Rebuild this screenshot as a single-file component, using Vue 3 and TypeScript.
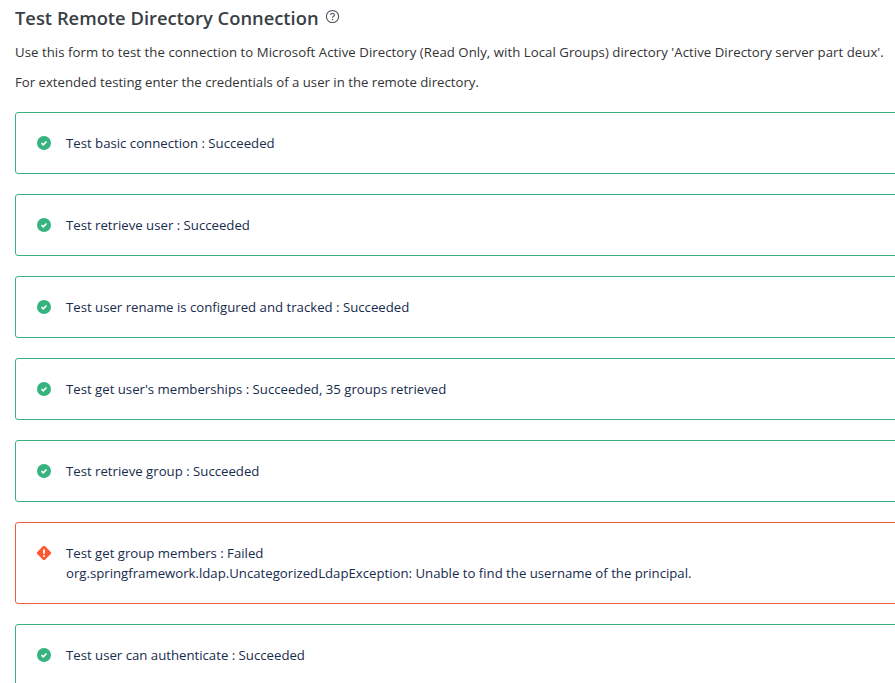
<template>
  <div class="page">
    <div class="title-row">
      <h1 class="title">Test Remote Directory Connection</h1>
      <svg class="help" viewBox="0 0 16 16" fill="none" stroke="#4a5158" aria-hidden="true">
        <circle cx="8" cy="8" r="6.5" stroke-width="1.1" />
        <path d="M6 6.4c0-1.2.9-1.9 2-1.9s2 .7 2 1.8c0 1.6-2 1.5-2 3" stroke-width="1.2" />
        <circle cx="8" cy="11.3" r=".8" fill="#4a5158" stroke="none" />
      </svg>
    </div>
    <p class="intro first">Use this form to test the connection to Microsoft Active Directory (Read Only, with Local Groups) directory 'Active Directory server part deux'.</p>
    <p class="intro second">For extended testing enter the credentials of a user in the remote directory.</p>

    <div class="results">
      <div v-for="result in results" :key="result.label" class="result" :class="result.error ? 'failed' : 'passed'">
        <svg v-if="!result.error" class="status" viewBox="0 0 14 14" aria-hidden="true">
          <circle cx="7" cy="7" r="7" fill="#36b37e" />
          <path d="M4.5 7.2l1.8 1.7 3.2-3.4" fill="none" stroke="#fff" stroke-width="1.6" />
        </svg>
        <svg v-else class="status" viewBox="0 0 14 14" aria-hidden="true">
          <path d="M5.7.5a1.9 1.9 0 0 1 2.6 0l5.2 5.2a1.9 1.9 0 0 1 0 2.6l-5.2 5.2a1.9 1.9 0 0 1-2.6 0L.5 8.3a1.9 1.9 0 0 1 0-2.6z" fill="#ff5630" />
          <path d="M7 3.2v4.6" stroke="#fff" stroke-width="1.9" />
          <circle cx="7" cy="10.1" r="1.05" fill="#fff" />
        </svg>
        <div class="message">
          <div>{{ result.label }}</div>
          <div v-if="result.error">{{ result.error }}</div>
        </div>
      </div>
    </div>
  </div>
</template>

<script setup lang="ts">
interface TestResult {
  label: string
  error?: string
}

const results: TestResult[] = [
  { label: 'Test basic connection : Succeeded' },
  { label: 'Test retrieve user : Succeeded' },
  { label: 'Test user rename is configured and tracked : Succeeded' },
  { label: "Test get user's memberships : Succeeded, 35 groups retrieved" },
  { label: 'Test retrieve group : Succeeded' },
  {
    label: 'Test get group members : Failed',
    error: 'org.springframework.ldap.UncategorizedLdapException: Unable to find the username of the principal.'
  },
  { label: 'Test user can authenticate : Succeeded' }
]
</script>

<style scoped>
.page {
  width: 895px;
  height: 683px;
  overflow: hidden;
  padding: 6px 0 0 15px;
  box-sizing: border-box;
  background: #fff;
  color: #172b4d;
  font-family: "Open Sans", "Noto Sans", sans-serif;
  font-size: 13.2px;
  line-height: 20px;
}

.title-row {
  display: flex;
  align-items: center;
  gap: 6px;
  height: 24px;
}

.title {
  margin: 0;
  font-size: 18.35px;
  font-weight: 600;
  line-height: 24px;
  color: #3a3f45;
  white-space: nowrap;
}

.help {
  width: 15px;
  height: 15px;
  margin-top: -3px;
}

.intro {
  margin: 12px 0 0;
  color: #333;
  white-space: nowrap;
}

.first {
  letter-spacing: 0.048px;
}

.second {
  margin-top: 10px;
}

.results {
  display: flex;
  flex-direction: column;
  gap: 20px;
  width: 1000px;
  margin-top: 20px;
}

.result {
  display: flex;
  gap: 15px;
  padding: 20px 21px;
  border: 1px solid;
  border-radius: 3px;
}

.passed {
  border-color: #36b37e;
}

.failed {
  border-color: #f15c47;
}

.status {
  flex: none;
  width: 14px;
  height: 14px;
  margin-top: 3px;
}

.message {
  white-space: nowrap;
}
</style>
